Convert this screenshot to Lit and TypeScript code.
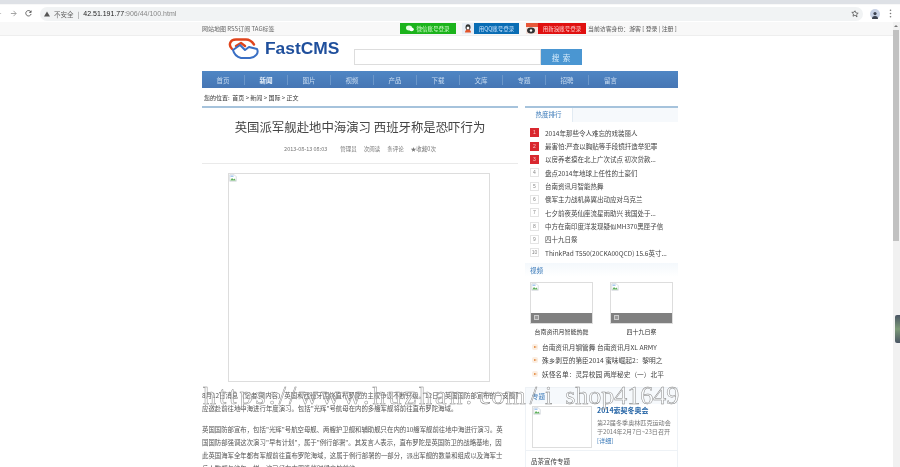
import { LitElement, html, css, svg } from "lit";
import { customElement } from "lit/decorators.js";

const nav = ["首页", "新闻", "图片", "视频", "产品", "下载", "文库", "专题", "招聘", "留言"];
const hot = [
  "2014年那些令人难忘的戏装丽人",
  "最害怕:严查以胸贴等手段镜扦造举犯罪",
  "以房养老摸在北上广次试点 初次贷款...",
  "盘点2014年地球上任性的土豪们",
  "台南资讯月智能热舞",
  "俄军主力战机鼻翼出动应对乌克兰",
  "七夕前夜英仙座流星雨助兴 我国处于...",
  "中方在南印度洋发现疑似MH370黑匣子信",
  "四十九日祭",
  "ThinkPad T550(20CKA00QCD) 15.6英寸...",
];
const vlist = ["台南资讯月钢管舞 台南资讯月XL ARMY", "殊乡剥豆的第臣2014 蜜味崛起2：黎明之", "妖怪名单：灵异校园 两岸秘史（一）北平"];

const broken = svg`<svg class="broken" viewBox="0 0 16 16"><path d="M1.5 1.5h9l4 4v9h-13z" fill="#fff" stroke="#b5bcc4"/><path d="M2.5 13l3.5-5 3 3 2-2 2.5 4z" fill="#5dae5a"/><path d="M3 3h6v3H3z" fill="#a9c8ee"/></svg>`;

@customElement("app-root")
export class AppRoot extends LitElement {
  static styles = css`
    :host { display: block; position: relative; width: 900px; height: 467px; overflow: hidden; background: #fff; font-family: "Noto Sans CJK SC", "Liberation Sans", sans-serif; color: #444; filter: blur(.35px); }
    .tabs { height: 4px; background: #dee1e6; border-bottom: 1px solid #f8f8f8; }
    .toolbar { height: 17px; background: #fff; display: flex; align-items: center; gap: 8px; }
    .toolbar svg { flex: none; }
    .toolbar .back { margin-left: -5px; }
    .omni { flex: 1; height: 14px; background: #f1f3f4; border-radius: 8px; display: flex; align-items: center; padding: 0 4px; gap: 4px; font-size: 6.5px; color: #777; }
    .omni b { font-weight: 400; color: #666; }
    .omni .url { color: #222; font-family: "Liberation Sans", sans-serif; font-size: 7px; }
    .omni .url span { color: #888; }
    .omni .sp { flex: 1; }
    .avatar { width: 10px; height: 10px; border-radius: 50%; background: #c9d3e6; display: flex; align-items: flex-end; justify-content: center; }
    .right-tools { display: flex; align-items: center; gap: 9px; margin: 0 8px 0 -1px; }
    .viewport { display: flex; height: 445px; }
    .page { flex: 1; min-width: 0; }
    .scroll { width: 7px; background: #f1f1f1; display: flex; flex-direction: column; align-items: flex-start; }
    .scroll .arrow { width: 6px; height: 8px; display: flex; align-items: center; justify-content: center; }
    .scroll .arrow::after { content: ""; border-bottom: 2.5px solid #777; border-left: 2px solid transparent; border-right: 2px solid transparent; }
    .scroll .thumb { width: 6px; height: 211px; background: #c1c1c1; }
    .topbar { height: 13px; background: #f8f8f8; border-bottom: 1px solid #eee; }
    .wrap { width: 476px; margin-left: 202px; }
    .topin { display: flex; align-items: center; height: 13px; font-size: 6px; color: #666; }
    .topin .links { width: 198px; white-space: nowrap; }
    .social { display: flex; align-items: center; height: 11px; }
    .wx { width: 56px; height: 11px; background: #1cb31c; color: #d8ffd0; font-size: 5.5px; display: flex; align-items: center; justify-content: center; gap: 2px; }
    .qq { display: flex; margin-left: 6px; height: 11px; font-size: 5.5px; color: #cfe6ff; }
    .qq i { width: 12px; background: #e8eef6; display: flex; align-items: center; justify-content: center; }
    .qq span { width: 45px; background: #0a6db4; display: flex; align-items: center; justify-content: center; }
    .wb { display: flex; margin-left: 7px; height: 11px; font-size: 5.5px; color: #ffd3d3; }
    .wb i { width: 12px; background: #f6e2dc; display: flex; }
    .wb span { width: 48px; background: #e01010; display: flex; align-items: center; justify-content: center; }
    .who { margin-left: 2px; font-size: 5.9px; white-space: nowrap; color: #555; }
    .logo-row { height: 35px; display: flex; }
    .logo { margin-left: 26px; display: flex; align-items: flex-start; gap: 5px; padding-top: 2px; width: 124px; }
    .logo b { font-family: "Liberation Sans", sans-serif; font-size: 17.4px; line-height: 21px; color: #1f4f9c; }
    .search { display: flex; margin-left: 2px; margin-top: 13px; height: 16px; }
    .search div { width: 185px; height: 14px; border: 1px solid #ddd; background: #fff; }
    .search button { width: 41px; height: 16px; border: 0; padding: 0; background: #4a96d2; color: #d8ecfb; font: 7.5px "Noto Sans CJK SC", sans-serif; letter-spacing: 1px; }
    .navbar { height: 17px; background: linear-gradient(#4f86c4, #4676b4); display: flex; align-items: center; }
    .navbar span { width: 43px; text-align: center; color: #c9dcf0; font-size: 6.5px; border-right: 1px solid #6c97c9; line-height: 10px; box-sizing: border-box; }
    .navbar span:nth-child(2) { color: #e8f1fa; font-weight: 700; }
    .navbar span:last-child { border: 0; }
    .crumbs { height: 18px; display: flex; align-items: center; font-size: 6px; color: #333; padding-left: 2px; }
    .cols { display: flex; justify-content: space-between; }
    .main { width: 316px; border-top: 2px solid #a6c3dc; }
    .main h1 { margin: 8px 0 0; height: 23px; text-align: center; font-size: 12.4px; line-height: 22px; font-weight: 400; color: #444; }
    .meta { height: 24px; display: flex; justify-content: center; gap: 7px; font-size: 5.5px; line-height: 20px; color: #777; border-bottom: 1px solid #eaeaea; }
    .meta .date { margin-right: 6px; }
    .photo { width: 262px; height: 209px; box-sizing: border-box; margin: 9px 0 0 26px; border: 1px solid #ddd; }
    .broken { display: block; width: 8px; height: 8px; }
    .main p { margin: 0; font-size: 6.4px; line-height: 13px; color: #555; white-space: nowrap; overflow: hidden; }
    .p1 { padding-top: 7px; }
    .p2 { padding-top: 8px; }
    .side { width: 153px; }
    .sidebox { border-top: 2px solid #a6c3dc; }
    .tabhead { height: 14px; background: #f6f9fc; }
    .tabhead span { display: block; width: 48px; height: 14px; box-sizing: border-box; background: #fff; border-right: 1px solid #e2ebf3; text-align: center; font-size: 6.5px; line-height: 13px; color: #3878b8; }
    .hot { margin: 4px 0 0 5px; }
    .hot div { height: 13.35px; display: flex; align-items: center; gap: 6px; font-size: 6.5px; color: #444; white-space: nowrap; }
    .hot i { flex: none; box-sizing: border-box; width: 9px; height: 9px; border: 1px solid #e4e4e4; font: normal 5px/7px "Liberation Sans", sans-serif; text-align: center; color: #888; }
    .hot .top i { background: #d9282f; border-color: #d9282f; color: #f7c8c8; }
    .vhead { margin-top: 4px; height: 14px; background: linear-gradient(#f4f8fc, #fff); font-size: 6.5px; line-height: 14px; color: #3878b8; padding-left: 5px; }
    .thumbs { display: flex; gap: 17px; margin: 5px 0 0 5px; }
    .thumbs > div { width: 63px; }
    .frame { height: 42px; box-sizing: border-box; border: 1px solid #ddd; position: relative; }
    .frame em { position: absolute; left: 0; right: 0; bottom: 0; height: 10px; background: #808080; }
    .frame em::after { content: ""; position: absolute; left: 3px; top: 2px; width: 5px; height: 5px; border: 1px solid #ccc; background: #999; box-sizing: border-box; }
    .thumbs p { margin: 3px 0 0; text-align: center; font-size: 6px; line-height: 10px; color: #333; white-space: nowrap; }
    .vlist { margin: 3px 0 0 7px; }
    .vlist div { display: flex; align-items: center; gap: 4px; height: 13.3px; font-size: 6.7px; color: #444; white-space: nowrap; }
    .vlist i { flex: none; width: 6px; height: 6px; border-radius: 2px; background: #fbeee2; display: flex; align-items: center; justify-content: center; }
    .vlist i::after { content: ""; border-left: 3px solid #e3873a; border-top: 1.5px solid transparent; border-bottom: 1.5px solid transparent; }
    .fea { margin-top: 7px; height: 90px; box-sizing: border-box; border-top: 1px solid #eef2f6; border-left: 1px solid #eef2f6; border-right: 1px solid #eef2f6; }
    .fea .fh { height: 16px; background: #f6f9fc; font-size: 6.5px; line-height: 16px; color: #3878b8; padding-left: 6px; }
    .fea .fb { display: flex; gap: 5px; padding: 2px 0 0 6px; height: 47px; box-sizing: border-box; border-bottom: 1px solid #eef2f6; }
    .fea .im { width: 60px; height: 42px; box-sizing: border-box; border: 1px solid #ddd; flex: none; }
    .fea .tx { width: 76px; }
    .fea h4 { margin: 0 0 3px; font-size: 7px; line-height: 9px; color: #2a68a8; font-weight: 700; white-space: nowrap; }
    .fea p { margin: 0; font-size: 6.1px; line-height: 9px; color: #777; }
    .fea p a { color: #3878b8; }
    .fea .more { margin: 6px 0 0 5px; font-size: 6.5px; line-height: 9px; color: #444; }
    .mark { position: absolute; left: 203px; top: 381px; font: 26px/30px "Liberation Serif", serif; color: rgba(255,255,255,.45); -webkit-text-stroke: .45px #7c7c7c; white-space: nowrap; pointer-events: none; }
    .mark .a { letter-spacing: 3px; }
    .mark .b { margin-left: 4px; letter-spacing: 1px; }
    .mark .c { margin-left: 3px; }
    .mark .d { margin-left: 8px; }
    .mark .e { margin-left: 13px; }
    .side-tool { position: absolute; right: 0; top: 315px; width: 5px; height: 28px; border-radius: 2px 0 0 2px; background: linear-gradient(#4a5564, #7d9a78 50%, #4a5564); }
  `;

  render() {
    return html`
      <div class="tabs"></div>
      <div class="toolbar">
        <svg class="back" width="7" height="7" viewBox="0 0 8 8"><path d="M7 4H1M4 1 1 4l3 3" fill="none" stroke="#bbb"/></svg>
        <svg width="7" height="7" viewBox="0 0 8 8"><path d="M1 4h6M4 1l3 3-3 3" fill="none" stroke="#999"/></svg>
        <svg width="7" height="7" viewBox="0 0 8 8"><path d="M6.7 2.2A3.1 3.1 0 1 0 7 4.5M7 .6v2.2H4.8" fill="none" stroke="#555"/></svg>
        <div class="omni">
          <svg width="6" height="6" viewBox="0 0 6 6"><path d="M3 .5 6 5.5H0z" fill="#555"/></svg>
          <b>不安全</b><span>|</span>
          <span class="url">42.51.191.77<span>:906/44/100.html</span></span>
          <span class="sp"></span>
          <svg width="8" height="8" viewBox="0 0 10 10"><path d="m5 1 1.2 2.7 2.8.3-2.1 1.9.6 2.9L5 6.4 2.5 7.8l.6-2.9L1 3l2.8-.3z" fill="none" stroke="#555"/></svg>
        </div>
        <div class="right-tools">
          <div class="avatar"><svg width="8" height="8" viewBox="0 0 8 8"><circle cx="4" cy="2.6" r="1.6" fill="#3c4350"/><path d="M1 8c0-2.4 1.3-3 3-3s3 .6 3 3z" fill="#3c4350"/></svg></div>
          <svg width="3" height="9" viewBox="0 0 3 9"><g fill="#777"><circle cx="1.5" cy="1.3" r=".8"/><circle cx="1.5" cy="4.5" r=".8"/><circle cx="1.5" cy="7.7" r=".8"/></g></svg>
        </div>
      </div>
      <div class="viewport">
        <div class="page">
          <div class="topbar"><div class="wrap topin">
            <div class="links">网站地图 RSS订阅 TAG标签</div>
            <div class="social">
              <div class="wx"><svg width="8" height="7" viewBox="0 0 8 7"><ellipse cx="3" cy="3" rx="3" ry="2.4" fill="#e4ffe0"/><ellipse cx="5.6" cy="4.4" rx="2.2" ry="1.8" fill="#fff"/></svg>微信账号登录</div>
              <div class="qq"><i><svg width="8" height="9" viewBox="0 0 8 9"><ellipse cx="4" cy="3.2" rx="2.5" ry="3" fill="#333"/><ellipse cx="4" cy="4" rx="1.4" ry="1.6" fill="#fff"/><path d="M1 8.5c0-2 1.2-3 3-3s3 1 3 3z" fill="#e2542a"/></svg></i><span>用QQ账号登录</span></div>
              <div class="wb"><i><svg width="12" height="11" viewBox="0 0 12 11"><path d="M0 0h12v4H0z" fill="#e8583a"/><ellipse cx="5" cy="7.5" rx="4" ry="3" fill="#333"/><circle cx="5" cy="7.5" r="1.2" fill="#fff"/></svg></i><span>用新浪账号登录</span></div>
              <div class="who">当前访客身份：游客 [ 登录 | 注册 ]</div>
            </div>
          </div></div>
          <div class="wrap">
            <div class="logo-row">
              <div class="logo">
                <svg width="32" height="22" viewBox="0 0 32 22" fill="none" stroke-linecap="round" stroke-linejoin="round">
                  <path d="M4 11C0 7 2 1.500 8 1.500h10c3 0 6 2 8 5M8 8l5-3 4 3" stroke="#e0441c" stroke-width="2.400"/>
                  <path d="M5 12l7-5 5 5 4-3 8 2c2 4-1 8-7 9H13C9 19 6 16 5 12z" stroke="#3a6fc4" stroke-width="2"/>
                </svg>
                <b>FastCMS</b>
              </div>
              <div class="search"><div></div><button>搜 索</button></div>
            </div>
            <div class="navbar">${nav.map((n) => html`<span>${n}</span>`)}</div>
            <div class="crumbs">您的位置: &nbsp;首页 &gt; 新闻 &gt; 国际 &gt; 正文</div>
            <div class="cols">
              <div class="main">
                <h1>英国派军舰赴地中海演习 西班牙称是恐吓行为</h1>
                <div class="meta"><span class="date">2013-08-13&nbsp;08:03</span><span>管理员</span><span>次阅读</span><span>条评论</span><span>★收藏0次</span></div>
                <div class="photo">${broken}</div>
                <p class="p1">8月12日消息（记者 周内容）英国和西班牙围绕直布罗陀的主权争议不断升级。12日，英国国防部宣布的一支舰队将启<br>应邀赴前往地中海进行年度演习。包括"光辉"号航母在内的多艘军舰将前往直布罗陀海域。</p>
                <p class="p2">英国国防部宣布，包括"光辉"号航空母舰、两艘护卫舰和辅助舰只在内的10艘军舰前往地中海进行演习。英<br>国国防部强调这次演习"早有计划"，属于"例行部署"。其发言人表示，直布罗陀是英国防卫的战略基地，因<br>此英国海军全年都有军舰前往直布罗陀海域，这属于例行部署的一部分，派出军舰的数量和组成以及海军士<br>兵人数都与往年一样，这已经在本周晚些时候启航前往。</p>
              </div>
              <div class="side">
                <div class="sidebox">
                  <div class="tabhead"><span>热度排行</span></div>
                  <div class="hot">${hot.map((t, i) => html`<div class=${i < 3 ? "top" : ""}><i>${i + 1}</i>${t}</div>`)}</div>
                </div>
                <div class="vhead">视频</div>
                <div class="thumbs">
                  <div><div class="frame">${broken}<em></em></div><p>台南资讯月智能热舞</p></div>
                  <div><div class="frame">${broken}<em></em></div><p>四十九日祭</p></div>
                </div>
                <div class="vlist">${vlist.map((t) => html`<div><i></i>${t}</div>`)}</div>
                <div class="fea">
                  <div class="fh">专题</div>
                  <div class="fb">
                    <div class="im">${broken}</div>
                    <div class="tx"><h4>2014索契冬奥会</h4><p>第22届冬季奥林匹克运动会于2014年2月7日~23日召开 <a>[详细]</a></p></div>
                  </div>
                  <div class="more">品茶宣传专题</div>
                </div>
              </div>
            </div>
          </div>
        </div>
        <div class="scroll"><div class="arrow"></div><div class="thumb"></div></div>
      </div>
      <div class="side-tool"></div>
      <div class="mark"><span class="a">https://www.huzhan.</span><span class="b">com</span><span class="c">/</span><span class="d">i</span><span class="e">shop41649</span></div>
    `;
  }
}
